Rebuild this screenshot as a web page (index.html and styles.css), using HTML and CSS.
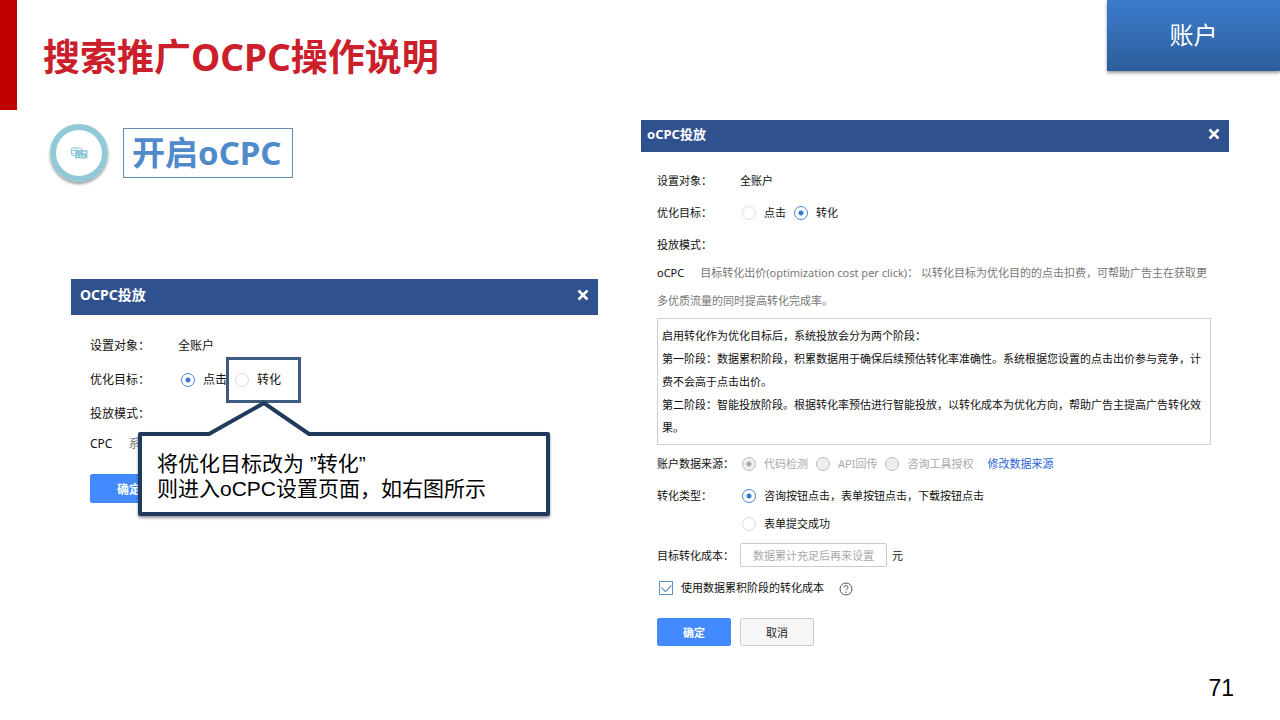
FILE: index.html
```html
<!DOCTYPE html>
<html lang="zh-CN">
<head>
  <meta charset="UTF-8" />
  <meta name="viewport" content="width=device-width, initial-scale=1.0" />
  <title>搜索推广OCPC操作说明</title>
  <link rel="stylesheet" href="styles.css">
</head>

<body>
  <header class="header">
    <div class="red-bar"></div>
    <h1>搜索推广OCPC操作说明</h1>
    <div class="tab">账户</div>
  </header>

  <main class="content">
    <section class="left">
      <div class="step">
        <div class="step-icon">
          <svg viewBox="0 0 17 12" width="17" height="12">
            <path d="M4 8.500H1.500A1 1 0 0 1 .5 7.500V2A1 1 0 0 1 1.500 1H9.500A1 1 0 0 1 10.500 2V3M1 3.500H4M3.500 1V2.500M6.500 1V2.500M1 6.500H3" fill="none" stroke="#92c9d6"/>
            <rect x="4" y="3" width="12.500" height="8.500" rx="1" fill="#92c9d6"/>
            <path d="M6 9.500H7M9 9.500H10M12 9.500H13M12 5.500H15" fill="none" stroke="#fff" stroke-width="1.500"/>
          </svg>
        </div>
        <h2>开启oCPC</h2>
      </div>

      <div class="dialog dialog-small">
        <div class="dialog-header">
          <h3>OCPC投放</h3>
          <button class="close" type="button" aria-label="关闭">
            <svg viewBox="0 0 12 12" width="12" height="12"><path d="M1.500 1.500L10.500 10.500M10.500 1.500L1.500 10.500"/></svg>
          </button>
        </div>
        <div class="dialog-body">
          <div class="row"><span class="name">设置对象：</span><span>全账户</span></div>
          <div class="row">
            <span class="name">优化目标：</span>
            <div class="options">
              <label><input type="radio" name="goal1" checked>点击</label>
              <label class="highlight"><input type="radio" name="goal1">转化</label>
            </div>
          </div>
          <div class="row"><span class="name">投放模式：</span></div>
          <p class="mode"><b>CPC</b><span>系统</span></p>
          <div class="buttons"><button class="btn btn-ok" type="button">确定</button></div>
        </div>
        <div class="callout">
          <svg class="pointer" viewBox="0 0 110 36" width="110" height="36">
            <path d="M0 32H4L60 2L106 32H110V36H0Z" fill="#fff"/>
            <path d="M0 34H5L60 3L105 34H110" fill="none" stroke="#1f3a5a" stroke-width="4"/>
          </svg>
          <p>将优化目标改为 ”转化”<br>则进入oCPC设置页面，如右图所示</p>
        </div>
      </div>
    </section>

    <section class="dialog">
      <div class="dialog-header">
        <h3>oCPC投放</h3>
        <button class="close" type="button" aria-label="关闭">
          <svg viewBox="0 0 12 12" width="12" height="12"><path d="M1.500 1.500L10.500 10.500M10.500 1.500L1.500 10.500"/></svg>
        </button>
      </div>
      <div class="dialog-body">
        <div class="row"><span class="name">设置对象：</span><span>全账户</span></div>
        <div class="row">
          <span class="name">优化目标：</span>
          <div class="options">
            <label><input type="radio" name="goal2">点击</label>
            <label><input type="radio" name="goal2" checked>转化</label>
          </div>
        </div>
        <div class="row"><span class="name">投放模式：</span></div>
        <p class="mode"><b>oCPC</b><span>目标转化出价(optimization cost per click)： 以转化目标为优化目的的点击扣费，可帮助广告主在获取更</span><br><span>多优质流量的同时提高转化完成率。</span></p>
        <div class="info">
          <p>启用转化作为优化目标后，系统投放会分为两个阶段：</p>
          <p>第一阶段：数据累积阶段，积累数据用于确保后续预估转化率准确性。系统根据您设置的点击出价参与竞争，计费不会高于点击出价。</p>
          <p>第二阶段：智能投放阶段。根据转化率预估进行智能投放，以转化成本为优化方向，帮助广告主提高广告转化效果。</p>
        </div>
        <div class="row">
          <span class="name">账户数据来源：</span>
          <div class="options">
            <label class="off"><input type="radio" name="source" checked disabled>代码检测</label>
            <label class="off"><input type="radio" name="source" disabled>API回传</label>
            <label class="off"><input type="radio" name="source" disabled>咨询工具授权</label>
            <a href="#">修改数据来源</a>
          </div>
        </div>
        <div class="row">
          <span class="name">转化类型：</span>
          <div class="options options-column">
            <label><input type="radio" name="type" checked>咨询按钮点击，表单按钮点击，下载按钮点击</label>
            <label><input type="radio" name="type">表单提交成功</label>
          </div>
        </div>
        <div class="row">
          <label class="name" for="cost">目标转化成本：</label>
          <input class="cost" type="text" id="cost" placeholder="数据累计充足后再来设置" disabled>
          <span>元</span>
        </div>
        <div class="row">
          <label class="check"><input type="checkbox" checked>使用数据累积阶段的转化成本</label>
          <svg class="help" viewBox="0 0 14 14" width="14" height="14">
            <circle cx="7" cy="7" r="6"/>
            <path d="M5 5.500A2 2 0 1 1 7.800 7.300Q7 7.700 7 8.500M7 9.600V11"/>
          </svg>
        </div>
        <div class="buttons">
          <button class="btn btn-ok" type="button">确定</button>
          <button class="btn" type="button">取消</button>
        </div>
      </div>
    </section>
  </main>

  <footer class="footer">71</footer>
</body>
</html>
```
FILE: styles.css
```css
* {
  margin: 0;
  padding: 0;
  box-sizing: border-box;
}

body {
  min-height: 100vh;
  display: flex;
  flex-direction: column;
  background-color: #fff;
  color: #111;
  font-family: "Noto Sans", "Noto Sans CJK SC", sans-serif;
}

input,
button {
  font-family: inherit;
  font-size: inherit;
}

.header {
  display: flex;
  align-items: flex-start;
}

.red-bar {
  width: 17px;
  height: 110px;
  background-color: #c00000;
}

h1 {
  margin: 32px auto 0 26px;
  color: #cb202c;
  font-size: 37px;
  line-height: 50px;
}

.tab {
  width: 173px;
  height: 71px;
  background: linear-gradient(#3b7ccc, #2d5d9b);
  box-shadow: 0 2px 3px rgba(0, 0, 0, 0.4);
  color: #fff;
  font-family: "Noto Sans CJK SC", sans-serif;
  font-size: 24px;
  line-height: 68px;
  text-align: center;
}

.content {
  display: grid;
  grid-template-columns: 548fr 588fr;
  align-items: start;
  gap: 43px;
  padding: 10px 51px 0 50px;
}

.step {
  display: flex;
  align-items: center;
  gap: 15px;
  padding-top: 4px;
}

.step-icon {
  width: 58px;
  height: 58px;
  display: flex;
  justify-content: center;
  align-items: center;
  border: 6px solid #92c9d6;
  border-radius: 50%;
  box-shadow: 0 2px 3px rgba(0, 0, 0, 0.4);
}

h2 {
  padding: 0 10px 0 8px;
  border: 1px solid #5f8bad;
  color: #508acb;
  font-size: 33px;
  line-height: 48px;
}

.dialog-header {
  height: 32px;
  display: flex;
  justify-content: space-between;
  align-items: flex-start;
  padding: 4px 9px 0 6px;
  background-color: #2f528f;
  color: #fff;
}

h3 {
  font-size: 13px;
  line-height: 20px;
}

.close {
  height: 20px;
  display: flex;
  align-items: center;
  background: none;
  border: none;
  cursor: pointer;
}

.close path {
  fill: none;
  stroke: #fff;
  stroke-width: 2.5;
}

.dialog-body {
  padding: 15px 18px 0 16px;
  font-size: 11px;
}

.row {
  min-height: 28px;
  display: flex;
  margin-bottom: 4px;
  line-height: 28px;
}

.name {
  width: 83px;
  flex-shrink: 0;
  white-space: nowrap;
}

.options {
  display: flex;
  gap: 8px;
  padding-left: 2px;
}

.options-column {
  flex-direction: column;
  gap: 0;
}

.options label,
.check {
  height: 28px;
  display: flex;
  align-items: center;
  gap: 8px;
  white-space: nowrap;
}

.options a {
  margin-left: 6px;
  color: #2a62d4;
  text-decoration: none;
}

input[type="radio"] {
  appearance: none;
  width: 14px;
  height: 14px;
  border: 1px solid #ddd;
  border-radius: 50%;
  background-color: #fff;
}

input[type="radio"]:checked {
  border-color: #4a86d8;
  background-image: radial-gradient(circle, #3c78d0 2px, transparent 3px);
}

input[type="radio"]:disabled {
  border-color: #bbb;
  background-color: #eee;
}

input[type="radio"]:checked:disabled {
  background-image: radial-gradient(circle, #aaa 2px, transparent 3px);
}

.off {
  color: #aaa;
}

.mode {
  color: #777;
  line-height: 28px;
  margin-top: -4px;
}

.mode b {
  margin-right: 16px;
  color: #111;
  font-weight: 400;
}

.info {
  margin: 3px 0 5px;
  padding: 5px 4px;
  border: 1px solid #d0d0d0;
  line-height: 23px;
}

.cost {
  width: 147px;
  height: 24px;
  margin: 1px 5px 0 0;
  padding: 0 12px;
  border: 1px solid #ccc;
  border-radius: 2px;
  background-color: #fff;
}

.cost::placeholder {
  color: #aaa;
}

.check {
  padding-left: 2px;
}

.check input {
  appearance: none;
  width: 14px;
  height: 14px;
  border: 1px solid #5b94c4;
  background-color: #fff;
}

/* the tick */
.check input::before {
  content: "";
  display: block;
  width: 8px;
  height: 5px;
  margin: 2px;
  border: solid #5b84a8;
  border-width: 0 0 1px 1px;
  transform: rotate(-45deg);
}

.help {
  margin: 8px 0 0 15px;
  fill: none;
  stroke: #555;
}

.buttons {
  display: flex;
  gap: 9px;
  padding-top: 12px;
}

.btn {
  width: 74px;
  height: 28px;
  background-color: #f7f7f7;
  border: 1px solid #ccc;
  border-radius: 2px;
  color: #222;
  cursor: pointer;
}

.btn-ok {
  background-color: #448aff;
  border-color: #448aff;
  color: #fff;
  font-weight: 700;
}

/* left dialog */
.dialog-small {
  position: relative;
  margin: 97px 0 0 21px;
}

.dialog-small .dialog-header {
  height: 36px;
  padding: 6px 9px 0;
}

.dialog-small h3 {
  font-size: 14px;
}

.dialog-small .dialog-body {
  padding: 17px 19px 0;
  font-size: 12px;
}

.dialog-small .row {
  margin-bottom: 6px;
}

.dialog-small .name {
  width: 88px;
}

.dialog-small .options {
  padding-left: 3px;
}

.dialog-small .buttons {
  padding-top: 16px;
}

.dialog-small .btn {
  width: 78px;
  height: 29px;
}

.highlight {
  position: relative;
}

.highlight::after {
  content: "";
  position: absolute;
  inset: -9px -20px -9px -9px;
  border: 3px solid #3d5a80;
}

.callout {
  position: absolute;
  top: 153px;
  left: 67px;
  right: 48px;
  padding: 15px 15px 11px;
  background-color: #fff;
  border: 4px solid #1f3a5a;
  border-radius: 2px;
  box-shadow: 0 2px 3px rgba(0, 0, 0, 0.4);
  color: #000;
  font-family: "Liberation Sans", "Noto Sans CJK SC", sans-serif;
  font-size: 21px;
  line-height: 25px;
}

.pointer {
  position: absolute;
  top: -36px;
  left: 62px;
}

.footer {
  margin-top: auto;
  padding: 0 46px 20px;
  color: #000;
  font-family: "Liberation Sans", sans-serif;
  font-size: 23px;
  line-height: 24px;
  text-align: right;
}
```
